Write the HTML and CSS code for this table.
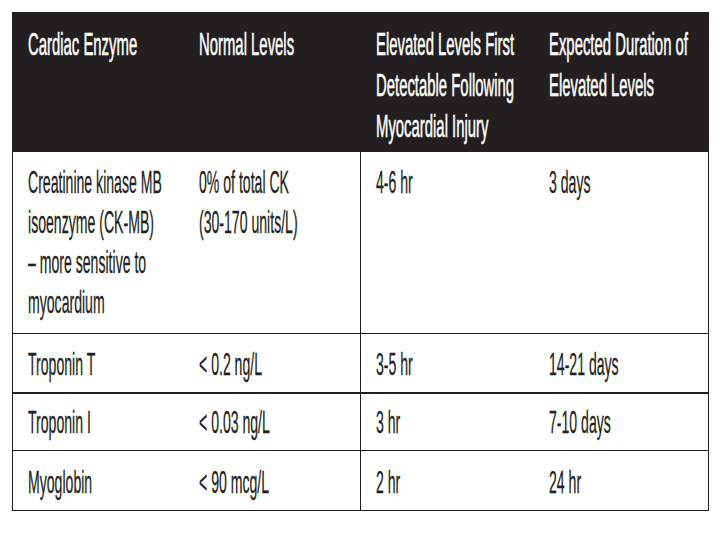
FILE: index.html
```html
<!DOCTYPE html>
<html lang="en">
<head>
<meta charset="utf-8">
<title>Cardiac Enzymes</title>
<link rel="stylesheet" href="styles.css">
</head>
<body>
<div class="page">
  <div class="tbl">
    <div class="row head">
      <div class="cell"><span class="t">Cardiac Enzyme</span></div>
      <div class="cell"><span class="t">Normal Levels</span></div>
      <div class="cell c3"><span class="t">Elevated Levels First<br>Detectable Following<br>Myocardial Injury</span></div>
      <div class="cell"><span class="t">Expected Duration of<br>Elevated Levels</span></div>
    </div>
    <div class="row r1">
      <div class="cell"><span class="t">Creatinine kinase MB<br>isoenzyme (CK-MB)<br>– more sensitive to<br>myocardium</span></div>
      <div class="cell"><span class="t">0% of total CK<br>(30-170 units/L)</span></div>
      <div class="cell c3"><span class="t">4-6 hr</span></div>
      <div class="cell"><span class="t">3 days</span></div>
    </div>
    <div class="row r2">
      <div class="cell"><span class="t">Troponin T</span></div>
      <div class="cell"><span class="t">&lt; 0.2 ng/L</span></div>
      <div class="cell c3"><span class="t">3-5 hr</span></div>
      <div class="cell"><span class="t">14-21 days</span></div>
    </div>
    <div class="row r3">
      <div class="cell"><span class="t">Troponin I</span></div>
      <div class="cell"><span class="t">&lt; 0.03 ng/L</span></div>
      <div class="cell c3"><span class="t">3 hr</span></div>
      <div class="cell"><span class="t">7-10 days</span></div>
    </div>
    <div class="row r4">
      <div class="cell"><span class="t">Myoglobin</span></div>
      <div class="cell"><span class="t">&lt; 90 mcg/L</span></div>
      <div class="cell c3"><span class="t">2 hr</span></div>
      <div class="cell"><span class="t">24 hr</span></div>
    </div>
  </div>
</div>
</body>
</html>
```
FILE: styles.css
```css
html, body {
  margin: 0;
  padding: 0;
  background: #ffffff;
  overflow: hidden;
}

.page {
  width: 720px;
  height: 540px;
  padding: 12px 0 0 12px;
  box-sizing: border-box;
  font-family: "Liberation Sans", Arial, sans-serif;
  color: #231f20;
}

.tbl {
  width: 697px;
  border-left: 1px solid #231f20;
  border-right: 1px solid #231f20;
  box-sizing: border-box;
}

.row {
  display: grid;
  grid-template-columns: 171px 176px 174px 1fr;
  box-sizing: border-box;
  border-bottom: 1px solid #231f20;
}

.cell {
  min-width: 0;
  overflow: hidden;
  padding-left: 15px;
  box-sizing: border-box;
}

.c3 {
  border-left: 1px solid #231f20;
  padding-left: 15px;
}

.t {
  display: inline-block;
  white-space: nowrap;
  font-size: 32px;
  line-height: 40px;
  transform: scaleX(0.44);
  transform-origin: 0 0;
  -webkit-text-stroke: 0.3px currentColor;
}

.head {
  background: #231f20;
  color: #ffffff;
  height: 140px;
  margin-left: -1px;
  margin-right: -1px;
  padding-left: 1px;
  padding-right: 1px;
  border-bottom: 0;
}

.head .cell {
  padding-top: 12px;
}

.head .c3 {
  border-left: 0;
  padding-left: 16px;
}

.head .t {
  line-height: 41px;
  transform: scaleX(0.465);
  -webkit-text-stroke: 0.6px currentColor;
}

.r1 {
  height: 182px;
}

.r1 .cell {
  padding-top: 10px;
}

.r2 {
  height: 60px;
  border-bottom-width: 2px;
}

.r2 .cell {
  padding-top: 10px;
}

.r3 {
  height: 57px;
}

.r3 .cell {
  padding-top: 8px;
}

.r4 {
  height: 60px;
}

.r4 .cell {
  padding-top: 11px;
}
```
